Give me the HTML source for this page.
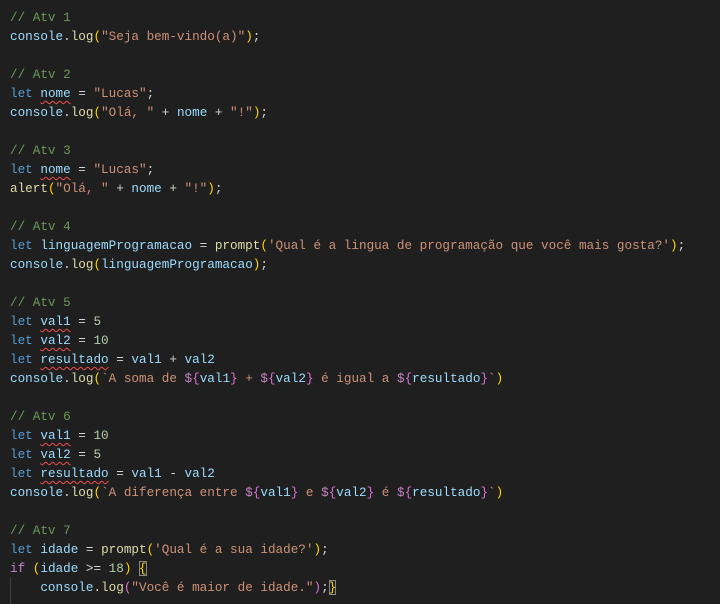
<!DOCTYPE html>
<html><head><meta charset="utf-8"><style>
html,body{margin:0;padding:0;background:#1f1f1f;width:720px;height:604px;overflow:hidden}
pre{margin:0;position:absolute;left:10px;top:8px;font-family:"Liberation Mono",monospace;font-size:12.65px;line-height:19px;color:#d4d4d4}
.c{color:#6a9955}.k{color:#569cd6}.v{color:#9cdcfe}.f{color:#dcdcaa}.s{color:#ce9178}.n{color:#b5cea8}.i{color:#c586c0}
.y{color:#ffd700}.p{color:#da70d6}.b{color:#179fff}
.w{text-decoration:underline wavy #f14c4c;text-decoration-thickness:1px;text-underline-offset:3px}
.bx{outline:1px solid #888;outline-offset:-1px}
.guide{position:absolute;left:10px;top:577px;width:1px;height:27px;background:#404040}
</style></head><body>
<div class="guide"></div>
<pre><span class="c">// Atv 1</span>
<span class="v">console</span>.<span class="f">log</span><span class="y">(</span><span class="s">"Seja bem-vindo(a)"</span><span class="y">)</span>;

<span class="c">// Atv 2</span>
<span class="k">let</span> <span class="v w">nome</span> = <span class="s">"Lucas"</span>;
<span class="v">console</span>.<span class="f">log</span><span class="y">(</span><span class="s">"Olá, "</span> + <span class="v">nome</span> + <span class="s">"!"</span><span class="y">)</span>;

<span class="c">// Atv 3</span>
<span class="k">let</span> <span class="v w">nome</span> = <span class="s">"Lucas"</span>;
<span class="f">alert</span><span class="y">(</span><span class="s">"Olá, "</span> + <span class="v">nome</span> + <span class="s">"!"</span><span class="y">)</span>;

<span class="c">// Atv 4</span>
<span class="k">let</span> <span class="v">linguagemProgramacao</span> = <span class="f">prompt</span><span class="y">(</span><span class="s">'Qual é a lingua de programação que você mais gosta?'</span><span class="y">)</span>;
<span class="v">console</span>.<span class="f">log</span><span class="y">(</span><span class="v">linguagemProgramacao</span><span class="y">)</span>;

<span class="c">// Atv 5</span>
<span class="k">let</span> <span class="v w">val1</span> = <span class="n">5</span>
<span class="k">let</span> <span class="v w">val2</span> = <span class="n">10</span>
<span class="k">let</span> <span class="v w">resultado</span> = <span class="v">val1</span> + <span class="v">val2</span>
<span class="v">console</span>.<span class="f">log</span><span class="y">(</span><span class="s">`A soma de </span><span class="i">$</span><span class="p">{</span><span class="v">val1</span><span class="p">}</span><span class="s"> + </span><span class="i">$</span><span class="p">{</span><span class="v">val2</span><span class="p">}</span><span class="s"> é igual a </span><span class="i">$</span><span class="p">{</span><span class="v">resultado</span><span class="p">}</span><span class="s">`</span><span class="y">)</span>

<span class="c">// Atv 6</span>
<span class="k">let</span> <span class="v w">val1</span> = <span class="n">10</span>
<span class="k">let</span> <span class="v w">val2</span> = <span class="n">5</span>
<span class="k">let</span> <span class="v w">resultado</span> = <span class="v">val1</span> - <span class="v">val2</span>
<span class="v">console</span>.<span class="f">log</span><span class="y">(</span><span class="s">`A diferença entre </span><span class="i">$</span><span class="p">{</span><span class="v">val1</span><span class="p">}</span><span class="s"> e </span><span class="i">$</span><span class="p">{</span><span class="v">val2</span><span class="p">}</span><span class="s"> é </span><span class="i">$</span><span class="p">{</span><span class="v">resultado</span><span class="p">}</span><span class="s">`</span><span class="y">)</span>

<span class="c">// Atv 7</span>
<span class="k">let</span> <span class="v">idade</span> = <span class="f">prompt</span><span class="y">(</span><span class="s">'Qual é a sua idade?'</span><span class="y">)</span>;
<span class="i">if</span> <span class="y">(</span><span class="v">idade</span> &gt;= <span class="n">18</span><span class="y">)</span> <span class="y bx">{</span>
    <span class="v">console</span>.<span class="f">log</span><span class="p">(</span><span class="s">"Você é maior de idade."</span><span class="p">)</span>;<span class="y bx">}</span></pre>
</body></html>
